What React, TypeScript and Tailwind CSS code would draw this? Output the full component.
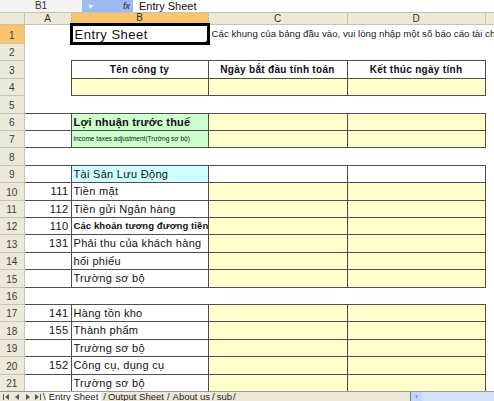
import React from 'react';

const font = "font-['Liberation_Sans','DejaVu_Sans',Arial,sans-serif]";

// bordered cell styles
const bd = 'border border-[#4f4f4f]';
const yellow = `${bd} bg-[#ffffcc]`;
const white = `${bd} bg-white`;
const green = `${bd} bg-[#ccffcc]`;
const cyan = `${bd} bg-[#ccffff]`;

type RowDef = {
  n: number;
  h: string;
  a?: { cls: string; text?: string };
  b?: { cls: string; text?: string; textCls?: string };
  c?: string;
  d?: string;
};

const rows: RowDef[] = [
  { n: 2, h: 'h-[17px]' },
  {
    n: 3,
    h: 'h-[18px]',
    b: { cls: white, text: 'Tên công ty', textCls: 'text-center font-bold text-[10px] tracking-[0.3px]' },
  },
  { n: 4, h: 'h-[17px]', b: { cls: yellow }, c: yellow, d: yellow },
  { n: 5, h: 'h-[18px]' },
  {
    n: 6,
    h: 'h-[17px]',
    a: { cls: white },
    b: { cls: green, text: 'Lợi nhuận trước thuế', textCls: 'font-bold text-[11px] tracking-[0.2px]' },
    c: yellow,
    d: yellow,
  },
  {
    n: 7,
    h: 'h-[17px]',
    a: { cls: white },
    b: { cls: green, text: 'income taxes adjustment(Trường sơ bộ)', textCls: 'text-[6.5px]' },
    c: yellow,
    d: yellow,
  },
  { n: 8, h: 'h-[18px]' },
  {
    n: 9,
    h: 'h-[17px]',
    a: { cls: white },
    b: { cls: cyan, text: 'Tài Sản Lưu Động', textCls: 'text-[11px] tracking-[0.3px]' },
    c: white,
    d: white,
  },
  { n: 10, h: 'h-[18px]', a: { cls: white, text: '111' }, b: { cls: white, text: 'Tiền mặt' }, c: yellow, d: yellow },
  { n: 11, h: 'h-[17px]', a: { cls: white, text: '112' }, b: { cls: white, text: 'Tiền gửi Ngân hàng' }, c: yellow, d: yellow },
  {
    n: 12,
    h: 'h-[17px]',
    a: { cls: white, text: '110' },
    b: { cls: white, text: 'Các khoản tương đương tiền', textCls: 'text-[9.5px] font-semibold tracking-[0.1px]' },
    c: yellow,
    d: yellow,
  },
  { n: 13, h: 'h-[18px]', a: { cls: white, text: '131' }, b: { cls: white, text: 'Phải thu của khách hàng' }, c: yellow, d: yellow },
  { n: 14, h: 'h-[17px]', a: { cls: white }, b: { cls: white, text: 'hối phiếu' }, c: yellow, d: yellow },
  { n: 15, h: 'h-[18px]', a: { cls: white }, b: { cls: white, text: 'Trường sơ bộ' }, c: yellow, d: yellow },
  { n: 16, h: 'h-[17px]' },
  { n: 17, h: 'h-[17px]', a: { cls: white, text: '141' }, b: { cls: white, text: 'Hàng tồn kho' }, c: yellow, d: yellow },
  { n: 18, h: 'h-[18px]', a: { cls: white, text: '155' }, b: { cls: white, text: 'Thành phẩm' }, c: yellow, d: yellow },
  { n: 19, h: 'h-[17px]', a: { cls: white }, b: { cls: white, text: 'Trường sơ bộ' }, c: yellow, d: yellow },
  { n: 20, h: 'h-[18px]', a: { cls: white, text: '152' }, b: { cls: white, text: 'Công cụ, dụng cụ' }, c: yellow, d: yellow },
  { n: 21, h: 'h-[17px]', a: { cls: white }, b: { cls: white, text: 'Trường sơ bộ' }, c: yellow, d: yellow },
];

const RowHead: React.FC<{ n: number; active?: boolean }> = ({ n, active }) => (
  <td
    className={`border-r border-b border-[#c7c3b1] text-center align-bottom pb-[2px] text-[10px] leading-none text-[#3b3b3b] ${
      active ? 'bg-[#f8c46d]' : 'bg-[#ece9d8]'
    }`}
  >
    {n}
  </td>
);

const TabBar: React.FC = () => (
  <div className="flex h-[10px] items-stretch bg-[#ece9d8] border-t border-[#9c9a8e] text-[9.5px] leading-none text-[#222]">
    <div className="flex items-center gap-[5px] pl-[3px] w-[43px] text-[#555]">
      <svg width="7" height="6" viewBox="0 0 7 6">
        <rect x="0" y="0" width="1" height="6" fill="#555" />
        <path d="M6 0 L2 3 L6 6 Z" fill="#555" />
      </svg>
      <svg width="5" height="6" viewBox="0 0 5 6">
        <path d="M4 0 L0 3 L4 6 Z" fill="#555" />
      </svg>
      <svg width="5" height="6" viewBox="0 0 5 6">
        <path d="M1 0 L5 3 L1 6 Z" fill="#555" />
      </svg>
      <svg width="7" height="6" viewBox="0 0 7 6">
        <path d="M0 0 L4 3 L0 6 Z" fill="#555" />
        <rect x="5" y="0" width="1" height="6" fill="#555" />
      </svg>
    </div>
    <div className="flex items-center">
      <span className="text-[#333]">\</span>
      <span className="bg-white px-[3px] underline">Entry Sheet</span>
      <span className="px-[2px]">/</span>
      <span>Output Sheet</span>
      <span className="px-[3px]">/</span>
      <span>About us</span>
      <span className="px-[2px]">/</span>
      <span>sub</span>
      <span className="px-[1px]">/</span>
    </div>
    <div className="flex-1" />
    <div className="flex w-[84px] items-stretch bg-[#c3d5fa]">
      <div className="flex w-[12px] items-center justify-center border-l border-[#6d7c9c] text-[#2c3e6a] text-[8px]">
        ‹
      </div>
      <div className="flex-1 bg-[#d3e0fb]" />
    </div>
  </div>
);

const App: React.FC = () => {
  return (
    <div className={`${font} flex h-[401px] w-[494px] flex-col overflow-hidden bg-white text-[#111]`}>
      {/* formula bar */}
      <div className="flex h-[12px] items-center text-[10px] leading-none">
        <div className="flex h-full w-[82px] items-center justify-center bg-[#f3f3f0] text-[#333]">B1</div>
        <div className="flex h-full w-[51px] items-center bg-[#9dbbf0] text-white">
          <span className="pl-[5px] text-[7px]">▼</span>
          <span className="ml-auto pr-[3px] italic text-[#222] text-[9px]">fx</span>
        </div>
        <div className="pl-[6px] text-[11px] text-[#111]">Entry Sheet</div>
      </div>

      <div className="flex-1 overflow-hidden">
        <table className="w-[494px] min-w-[494px] table-fixed border-collapse">
          <colgroup>
            <col className="w-[24px]" />
            <col className="w-[47px]" />
            <col className="w-[137px]" />
            <col className="w-[139px]" />
            <col className="w-[138px]" />
            <col className="w-[9px]" />
          </colgroup>
          <thead>
            <tr className="h-[12px] text-[10px] leading-none text-[#333]">
              <th className="w-[24px] border-r border-b border-t border-[#c7c3b1] bg-[#ece9d8] font-normal" />
              <th className="w-[47px] border-r border-b border-t border-[#c7c3b1] bg-[#ece9d8] font-normal">A</th>
              <th className="w-[137px] border-r border-b border-t border-[#c7c3b1] bg-[#f8c46d] font-normal">B</th>
              <th className="w-[139px] border-r border-b border-t border-[#c7c3b1] bg-[#ece9d8] font-normal">C</th>
              <th className="w-[138px] border-r border-b border-t border-[#c7c3b1] bg-[#ece9d8] font-normal">D</th>
              <th className="w-[9px] border-b border-t border-[#c7c3b1] bg-[#ece9d8] font-normal" />
            </tr>
          </thead>
          <tbody className="leading-none">
            <tr className="h-[19px]">
              <RowHead n={1} active />
              <td />
              <td className="relative border-[3px] border-black px-[2px] text-[13px] tracking-[0.5px]">
                Entry Sheet
                <span className="absolute -bottom-[3px] -right-[3px] h-[4px] w-[4px] bg-black" />
              </td>
              <td colSpan={3} className="overflow-hidden whitespace-nowrap pl-[2px] text-[9.7px] text-[#222]">
                Các khung của bảng đầu vào, vui lòng nhập một số báo cáo tài chính
              </td>
            </tr>
            {rows.map((r) => (
              <tr key={r.n} className={r.h}>
                <RowHead n={r.n} />
                <td className={`${r.a ? r.a.cls : ''} text-right pr-[2px] text-[11px] tracking-[0.4px]`}>
                  {r.a?.text}
                </td>
                <td
                  className={`${r.b ? r.b.cls : ''} whitespace-nowrap overflow-hidden px-[2px] ${
                    r.b?.textCls ?? 'text-[11px] tracking-[0.3px]'
                  }`}
                >
                  {r.b?.text}
                </td>
                {r.n === 3 ? (
                  <>
                    <td className={`${white} text-center font-bold text-[10px] tracking-[0.3px]`}>
                      Ngày bắt đầu tính toán
                    </td>
                    <td className={`${white} text-center font-bold text-[10px] tracking-[0.3px]`}>
                      Kết thúc ngày tính
                    </td>
                  </>
                ) : (
                  <>
                    <td className={r.c ?? ''} />
                    <td className={r.d ?? ''} />
                  </>
                )}
                <td />
              </tr>
            ))}
          </tbody>
        </table>
      </div>

      <TabBar />
    </div>
  );
};

export default App;
